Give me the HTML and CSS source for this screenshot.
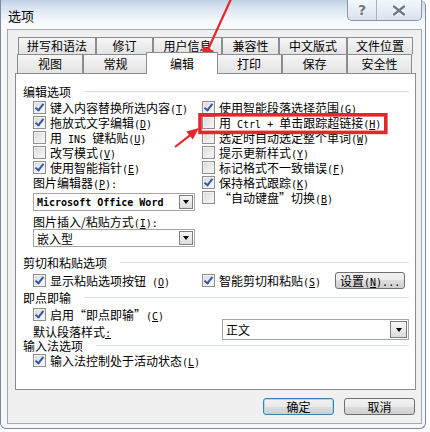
FILE: index.html
```html
<!DOCTYPE html>
<html lang="zh-CN">
<head>
    <meta charset="UTF-8">
    <title>选项</title>
    <link rel="stylesheet" href="styles.css">
</head>
<body>

    <div class="window">
        <!-- 标题栏 -->
        <div class="titlebar">
            <div class="caption">选项</div>
            <div class="caption-btns">
                <div class="cbtn help">?</div>
                <div class="cbtn close">
                    <svg width="14" height="11" viewBox="0 0 14 11">
                        <path d="M2 1.5 L12 9.5 M12 1.5 L2 9.5" stroke="#fff" stroke-width="4.4" stroke-linecap="round"/>
                        <path d="M2 1.5 L12 9.5 M12 1.5 L2 9.5" stroke="#6e7785" stroke-width="2.4" stroke-linecap="round"/>
                    </svg>
                </div>
            </div>
        </div>

        <div class="client">
            <!-- 选项卡 -->
            <div class="tabrow row1">
                <div class="tab">拼写和语法</div>
                <div class="tab">修订</div>
                <div class="tab">用户信息</div>
                <div class="tab">兼容性</div>
                <div class="tab">中文版式</div>
                <div class="tab">文件位置</div>
            </div>
            <div class="tabrow row2">
                <div class="tab">视图</div>
                <div class="tab">常规</div>
                <div class="tab sel">编辑</div>
                <div class="tab">打印</div>
                <div class="tab">保存</div>
                <div class="tab">安全性</div>
            </div>

            <div class="panel">
                <!-- 编辑选项 -->
                <div class="gtitle"><span>编辑选项</span><i></i></div>
                <div class="cols first">
                    <div class="col">
                        <div class="opt"><b class="cb on"></b><span class="t">键入内容替换所选内容<span class="en">(<u>T</u>)</span></span></div>
                        <div class="opt"><b class="cb on"></b><span class="t">拖放式文字编辑<span class="en">(<u>D</u>)</span></span></div>
                        <div class="opt"><b class="cb"></b><span class="t">用<span class="en"> INS </span>键粘贴<span class="en">(<u>U</u>)</span></span></div>
                        <div class="opt"><b class="cb"></b><span class="t">改写模式<span class="en">(<u>V</u>)</span></span></div>
                        <div class="opt"><b class="cb on"></b><span class="t">使用智能指针<span class="en">(<u>E</u>)</span></span></div>
                        <div class="lbl">图片编辑器<span class="en">(<u>P</u>):</span></div>
                        <div class="dd dd-pic">
                            <span class="dd-text en mono">Microsoft Office Word</span>
                            <span class="dd-btn"><i></i></span>
                        </div>
                        <div class="lbl lbl2">图片插入/粘贴方式<span class="en">(<u>I</u>):</span></div>
                        <div class="dd dd-pic2">
                            <span class="dd-text">嵌入型</span>
                            <span class="dd-btn"><i></i></span>
                        </div>
                    </div>
                    <div class="col">
                        <div class="opt"><b class="cb on"></b><span class="t">使用智能段落选择范围<span class="en">(<u>G</u>)</span></span></div>
                        <div class="opt"><b class="cb"></b><span class="t">用<span class="en"> Ctrl + </span>单击跟踪超链接<span class="en">(<u>H</u>)</span></span></div>
                        <div class="opt"><b class="cb"></b><span class="t">选定时自动选定整个单词<span class="en">(<u>W</u>)</span></span></div>
                        <div class="opt"><b class="cb"></b><span class="t">提示更新样式<span class="en">(<u>Y</u>)</span></span></div>
                        <div class="opt"><b class="cb"></b><span class="t">标记格式不一致错误<span class="en">(<u>F</u>)</span></span></div>
                        <div class="opt"><b class="cb on"></b><span class="t">保持格式跟踪<span class="en">(<u>K</u>)</span></span></div>
                        <div class="opt"><b class="cb"></b><span class="t">“自动键盘”切换<span class="en">(<u>B</u>)</span></span></div>
                    </div>
                </div>

                <!-- 剪切和粘贴选项 -->
                <div class="gtitle g2"><span>剪切和粘贴选项</span><i></i></div>
                <div class="cols paste">
                    <div class="opt"><b class="cb on"></b><span class="t">显示粘贴选项按钮<span class="en"> (<u>O</u>)</span></span></div>
                    <div class="opt"><b class="cb on"></b><span class="t">智能剪切和粘贴<span class="en">(<u>S</u>)</span></span>
                        <div class="btn btn-set">设置<span class="en">(<u>N</u>)...</span></div>
                    </div>
                </div>

                <!-- 即点即输 -->
                <div class="gtitle g3"><span>即点即输</span><i></i></div>
                <div class="sub">
                    <div class="opt"><b class="cb on"></b><span class="t">启用“即点即输”<span class="en">(<u>C</u>)</span></span></div>
                    <div class="style-row">
                        <span class="lbl">默认段落样式<span class="en"><u>:</u></span></span>
                        <div class="dd dd-style">
                            <span class="dd-text">正文</span>
                            <span class="dd-btn"><i></i></span>
                        </div>
                    </div>
                </div>

                <!-- 输入法选项 -->
                <div class="gtitle g4"><span>输入法选项</span><i></i></div>
                <div class="sub">
                    <div class="opt"><b class="cb on"></b><span class="t">输入法控制处于活动状态<span class="en">(<u>L</u>)</span></span></div>
                </div>
            </div>

            <div class="buttons">
                <div class="btn btn-ok">确定</div>
                <div class="btn">取消</div>
            </div>
        </div>
    </div>

    <!-- 红色标注 -->
    <svg class="marks" width="430" height="432" viewBox="0 0 430 432">
        <rect x="200" y="114.8" width="185.8" height="17.6" fill="none" stroke="#e5262b" stroke-width="3.6"/>
        <line x1="231" y1="-1" x2="207.8" y2="50" stroke="#e5262b" stroke-width="2.2"/>
        <polygon points="201,65 214,51.1 203,46.1" fill="#e5262b"/>
        <line x1="175" y1="147" x2="190.5" y2="134.8" stroke="#e5262b" stroke-width="2.2"/>
        <polygon points="199,128 192.7,139.6 186.3,131.4" fill="#e5262b"/>
    </svg>

</body>
</html>
```

FILE: styles.css
```css
body{
    margin: 0;
    background: #fff;
    font-family: "Noto Sans CJK SC", sans-serif;
    font-size: 12px;
    color: #000;
}

.window{
    width: 426px;
    height: 429px;
    box-sizing: border-box;
    border: 1px solid #7d8a9c;
    border-top: 0;
    border-radius: 0 6px 6px 6px;
    background: #f5f7fa;
}

/* 标题栏 */
.titlebar{
    display: flex;
    height: 29px;
    background: linear-gradient(#bfd0e4 0, #d9e4f1 8px, #f3f7fb 20px, #fbfcfe 29px);
    border-radius: 0 6px 0 0;
}

.caption{
    padding: 8px 0 0 7px;
    font-size: 13px;
    line-height: 15px;
}

.caption-btns{
    display: flex;
    height: 20px;
    margin-left: auto;
    margin-right: 3px;
    border: 1px solid #8c98aa;
    border-top: 0;
    border-radius: 0 0 5px 5px;
    overflow: hidden;
    background: linear-gradient(#f4f7fb, #dae3ee);
}

.cbtn{
    display: flex;
    align-items: center;
    justify-content: center;
    height: 20px;
}

.help{
    width: 28px;
    border-right: 1px solid #a8b2c0;
    font: bold 14px "DejaVu Sans", sans-serif;
    color: #6e7785;
    text-shadow: 0 0 1px #fff, 0 0 2px #fff;
}

.close{
    width: 44px;
}

/* 客户区 */
.client{
    height: 395px;
    box-sizing: border-box;
    margin: 0 3px 0 6px;
    border: 1px solid #a2aab6;
    background: #f0f0f0;
    padding: 7px 5px 0 7px;
}

.tabrow{
    display: flex;
    align-items: flex-end;
}

.row1{
    height: 17px;
    margin-left: 3px;
}

.row2{
    height: 19px;
    margin-left: 2px;
}

.tab{
    flex: none;
    box-sizing: border-box;
    border: 1px solid #898c95;
    border-bottom: 0;
    background: linear-gradient(#f6f6f6, #e3e3e3);
    text-align: center;
    white-space: nowrap;
}

.row1 .tab{
    height: 17px;
    line-height: 16px;
}

.row2 .tab{
    height: 19px;
    line-height: 18px;
}

.row1 .tab:nth-child(1){ width: 78px; }
.row1 .tab:nth-child(2){ width: 57px; }
.row1 .tab:nth-child(3){ width: 69px; }
.row1 .tab:nth-child(4){ width: 57px; }
.row1 .tab:nth-child(5){ width: 68px; }
.row1 .tab:nth-child(6){ width: 66px; }

.row2 .tab:nth-child(1){ width: 66px; }
.row2 .tab:nth-child(2){ width: 65px; }
.row2 .tab:nth-child(4){ width: 66px; }
.row2 .tab:nth-child(5){ width: 65px; }
.row2 .tab:nth-child(6){ width: 65px; }

.row2 .sel{
    width: 72px;
    height: 22px;
    margin: 0 -2px -1px;
    padding-top: 2px;
    background: #fff;
    position: relative;
    z-index: 1;
}

.panel{
    height: 317px;
    box-sizing: border-box;
    border: 1px solid #898c95;
    background: #fff;
    padding: 10px 6px 0 7px;
}

/* 分组标题 */
.gtitle{
    display: flex;
    align-items: center;
    height: 15px;
    line-height: 15px;
}

.gtitle i{
    flex: 1;
    height: 1px;
    margin-left: 13px;
    background: #d5dfe5;
}

.g2{ margin-top: 8px; }
.g3{ margin-top: 0; }
.g4{ margin-top: -2px; }

.cols{
    display: grid;
    grid-template-columns: 169px 1fr;
    padding-left: 10px;
}

.first{ margin-top: 1px; }

.paste{
    margin-top: 1px;
}

.paste .opt{
    height: 19px;
}

.sub{
    padding-left: 10px;
}

.g3 + .sub{ margin-top: 2px; }

.opt{
    display: flex;
    align-items: center;
    height: 15px;
    white-space: nowrap;
}

.opt .t{
    display: block;
    height: 15px;
    line-height: 15px;
}

.lbl{
    height: 15px;
    line-height: 15px;
    white-space: nowrap;
}

.lbl2{ margin-top: 3px; }

.en{
    font-family: "DejaVu Sans Mono", monospace;
    font-size: 10px;
}

.mono{
    font-weight: bold;
}

/* 复选框 */
.cb{
    flex: none;
    position: relative;
    width: 13px;
    height: 13px;
    box-sizing: border-box;
    margin-right: 4px;
    border: 1px solid #8e8f8f;
    background: linear-gradient(135deg, #d8d8d8, #fafafa);
    box-shadow: inset 0 0 0 1px #f2f2f2;
}

.cb.on::after{
    content: "";
    position: absolute;
    left: 3px;
    top: 0;
    width: 3px;
    height: 7px;
    border: solid #3556a5;
    border-width: 0 2px 2px 0;
    transform: rotate(38deg);
}

/* 下拉框 */
.dd{
    display: flex;
    align-items: center;
    box-sizing: border-box;
    height: 18px;
    padding: 1px;
    border: 1px solid #a5a5a5;
    background: #fff;
}

.dd-text{
    flex: 1;
    padding-left: 2px;
    white-space: nowrap;
}

.dd-btn{
    display: flex;
    align-items: center;
    justify-content: center;
    box-sizing: border-box;
    width: 14px;
    height: 14px;
    border: 1px solid #7f7f7f;
    background: linear-gradient(#f7f7f7, #dcdcdc);
}

.dd-btn i{
    border-left: 3.5px solid transparent;
    border-right: 3.5px solid transparent;
    border-top: 4px solid #000;
}

.dd-pic{
    width: 162px;
    margin-top: 3px;
}

.dd-pic2{
    width: 162px;
}

.style-row{
    display: flex;
    align-items: center;
    margin-top: -3px;
}

.style-row .lbl{
    padding-top: 4px;
}

.dd-style{
    width: 187px;
    height: 21px;
    margin-left: auto;
}

.dd-style .dd-btn{
    width: 17px;
    height: 17px;
}

/* 按钮 */
.btn{
    box-sizing: border-box;
    width: 71px;
    height: 17px;
    border: 1px solid #707070;
    border-radius: 3px;
    background: linear-gradient(#f2f2f2 0, #ebebeb 50%, #dddddd 50%, #cfcfcf 100%);
    text-align: center;
    line-height: 15px;
    white-space: nowrap;
}

.btn-set{
    width: 70px;
    margin-left: 14px;
}

.btn-ok{
    border-color: #3c7fb1;
    box-shadow: inset 0 0 0 1px #9fdcf6;
}

.buttons{
    display: flex;
    justify-content: flex-end;
    gap: 10px;
    margin-top: 8px;
    padding-right: 1px;
}

/* 标注层 */
.marks{
    position: absolute;
    top: 0;
    left: 0;
    pointer-events: none;
}
```
